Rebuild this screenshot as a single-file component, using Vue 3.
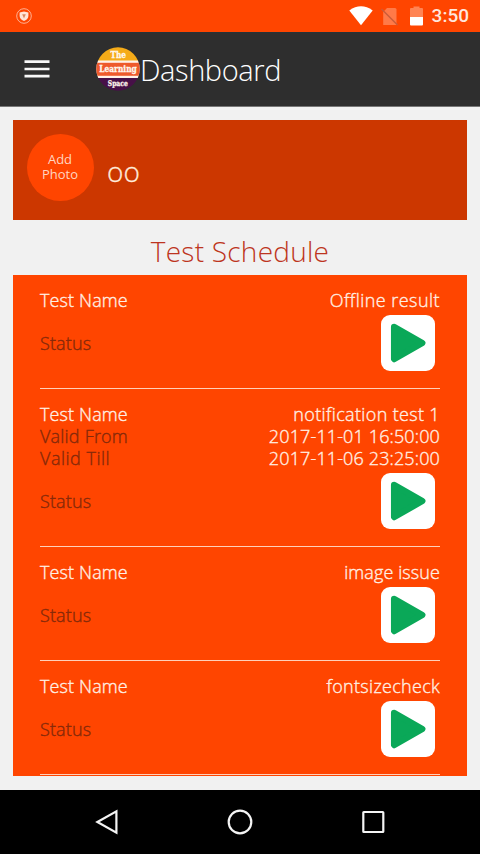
<script setup>
const tests = [
  { name: 'Offline result', tracking: 0.45 },
  { name: 'notification test 1', from: '2017-11-01 16:50:00', till: '2017-11-06 23:25:00', tracking: 0.35 },
  { name: 'image issue', tracking: 0.1 },
  { name: 'fontsizecheck', tracking: 0.3 }
]
</script>

<template>
  <div class="screen">
    <div class="status-bar">
      <svg class="shield" width="18" height="18" viewBox="0 0 18 18">
        <circle cx="9" cy="9" r="7.3" fill="none" stroke="#ffb092" stroke-width="1" />
        <path d="M9 4.4 L13.4 5.5 V9 C13.4 11.5 11 13.2 9 14 C7 13.2 4.6 11.5 4.6 9 V5.5Z" fill="#ffe3d6" />
        <path d="M7.2 7.3 H10.8 L9 11.4Z" fill="#d9875f" />
      </svg>
      <div class="indicators">
        <svg width="24" height="20" viewBox="0 0 24 20"><path d="M0.3 4.4 Q12 -3.8 23.7 4.4 L12 19.3Z" fill="#fff" /></svg>
        <svg width="18" height="19" viewBox="0 0 18 19">
          <path d="M6 1 H14 Q15.5 1 15.5 2.5 V18 H2.2 V5Z" fill="#ff7a48" />
          <path d="M0.5 2 L16.5 18" stroke="#cb5c38" stroke-width="1.5" />
        </svg>
        <svg width="13" height="20" viewBox="0 0 13 20">
          <path d="M3.5 0.5 H9.5 V2 H12 Q13 2 13 3 V11 H0 V3 Q0 2 1 2 H3.5Z" fill="#ff8454" />
          <path d="M0 11 H13 V18.5 Q13 19.5 12 19.5 H1 Q0 19.5 0 18.5Z" fill="#fff" />
        </svg>
        <span class="clock">3:50</span>
      </div>
    </div>

    <header class="toolbar">
      <svg class="menu" width="26" height="20" viewBox="0 0 26 20">
        <path d="M0.5 2.7 H25.5 M0.5 10 H25.5 M0.5 17.2 H25.5" stroke="#f8f8f8" stroke-width="2.7" />
      </svg>
      <svg class="logo" width="44" height="44" viewBox="0 0 44 44">
        <defs><clipPath id="disc"><circle cx="22" cy="22" r="21.7" /></clipPath></defs>
        <g clip-path="url(#disc)">
          <rect width="44" height="14" fill="#f5ab18" />
          <rect y="13.5" width="44" height="17.5" fill="#fff2e8" />
          <rect y="15.8" width="44" height="13" fill="#ee5a2b" />
          <rect y="31" width="44" height="13" fill="#471048" />
        </g>
        <g class="logo-text">
          <text x="22.2" y="10.8" textLength="15.5" lengthAdjust="spacingAndGlyphs">The</text>
          <text x="22" y="25.2" textLength="37.5" lengthAdjust="spacingAndGlyphs">Learning</text>
          <text x="21.8" y="38.6" textLength="20" lengthAdjust="spacingAndGlyphs" class="small">Space</text>
        </g>
      </svg>
      <h1>Dashboard</h1>
    </header>

    <main>
      <section class="profile">
        <div class="photo">Add<br />Photo</div>
        <div class="user">oo</div>
      </section>
      <h2>Test Schedule</h2>
      <section class="list">
        <article v-for="t in tests" :key="t.name">
          <div class="row name"><span>Test Name</span><span :style="{ letterSpacing: t.tracking + 'px' }">{{ t.name }}</span></div>
          <template v-if="t.from">
            <div class="row"><span class="from">Valid From</span><span class="value">{{ t.from }}</span></div>
            <div class="row"><span class="till">Valid Till</span><span class="value">{{ t.till }}</span></div>
          </template>
          <div class="row status">
            <span>Status</span>
            <div class="play">
              <svg width="54" height="56" viewBox="0 0 54 56">
                <path d="M13.2 12 L41.2 28 L13.2 44Z" fill="#0aa858" stroke="#0aa858" stroke-width="6.5" stroke-linejoin="round" />
              </svg>
            </div>
          </div>
        </article>
      </section>
    </main>

    <nav>
      <svg width="24" height="26" viewBox="0 0 24 26"><path d="M2.4 13 L21.4 2.4 V23.6Z" /></svg>
      <svg width="26" height="26" viewBox="0 0 26 26"><circle cx="13" cy="13" r="11.3" /></svg>
      <svg width="24" height="26" viewBox="0 0 24 26"><rect x="2.3" y="3" width="20" height="20" rx="0.5" /></svg>
    </nav>
  </div>
</template>

<style>
body { margin: 0; }
</style>

<style scoped>
.screen {
  width: 480px;
  height: 854px;
  display: flex;
  flex-direction: column;
  overflow: hidden;
  background: #f1f1f1;
  font-family: "Open Sans", "Noto Sans", sans-serif;
  font-weight: 300;
}
.status-bar {
  height: 32px;
  flex: none;
  display: flex;
  justify-content: space-between;
  align-items: center;
  padding: 0 11px 0 15px;
  background: #ff4500;
}
.indicators { display: flex; align-items: center; }
.indicators svg:nth-child(2) { margin-left: 8px; }
.indicators svg:nth-child(3) { margin-left: 11px; }
.clock {
  margin-left: 9px;
  color: #ffe6dc;
  font: 500 19px/32px Roboto, sans-serif;
}
.toolbar {
  height: 75px;
  flex: none;
  box-sizing: border-box;
  display: flex;
  align-items: center;
  padding-left: 24px;
  background: #2e2e2e;
  border-top: 1px solid #263238;
  border-bottom: 1px solid #777;
}
.menu { margin-bottom: 2px; }
.logo { margin: 0 0 2px 46px; }
.logo-text text {
  fill: #fff7ee;
  stroke: #fff7ee;
  stroke-width: 0.3;
  text-anchor: middle;
  font: bold 8.6px "DejaVu Serif", serif;
}
.logo-text .small { font-size: 7.8px; }
h1 {
  margin: 1px 0 0;
  color: #fff;
  font-size: 29px;
  line-height: 40px;
  font-weight: 300;
  letter-spacing: -0.4px;
}
main { flex: 1; padding: 13px 13px 0; }
.profile {
  height: 100px;
  box-sizing: border-box;
  display: flex;
  padding: 13.5px 13.5px 0;
  background: #cc3700;
}
.photo {
  width: 67px;
  height: 67px;
  box-sizing: border-box;
  padding-top: 18.5px;
  border-radius: 50%;
  background: #ff4500;
  color: #ffd5c2;
  font-size: 13px;
  line-height: 15px;
  font-weight: 400;
  text-align: center;
}
.user {
  margin: 20.5px 0 0 13.5px;
  color: #ffead9;
  font-size: 28px;
  line-height: 34px;
  -webkit-text-stroke: 0.3px;
}
h2 {
  margin: 0;
  height: 55px;
  color: #bd3420;
  font-size: 28px;
  line-height: 62px;
  font-weight: 300;
  letter-spacing: 0.25px;
  text-align: center;
}
.list { height: 501px; overflow: hidden; background: #ff4500; }
article {
  margin: 0 27px;
  padding: 14px 0 16.6px;
  border-bottom: 1px solid #ffd0ba;
}
.row {
  display: flex;
  justify-content: space-between;
  color: #85290a;
  font-size: 18px;
  line-height: 22.3px;
  letter-spacing: 0.13px;
  -webkit-text-stroke: 0.35px;
}
.from { letter-spacing: 0.2px; }
.till { letter-spacing: 0.5px; }
.name, .value { color: #fff0e4; }
.status { height: 60px; align-items: center; }
.status span { padding-top: 3px; }
.play {
  width: 54px;
  height: 56px;
  margin: 3px 5px 0 0;
  border-radius: 9px;
  background: #fff;
}
.play svg { display: block; }
nav {
  height: 64px;
  flex: none;
  display: flex;
  justify-content: space-between;
  align-items: center;
  box-sizing: border-box;
  padding: 0 95px;
  background: #000;
}
nav path, nav circle, nav rect { fill: none; stroke: #f4f4f4; stroke-width: 2.2; }
</style>
